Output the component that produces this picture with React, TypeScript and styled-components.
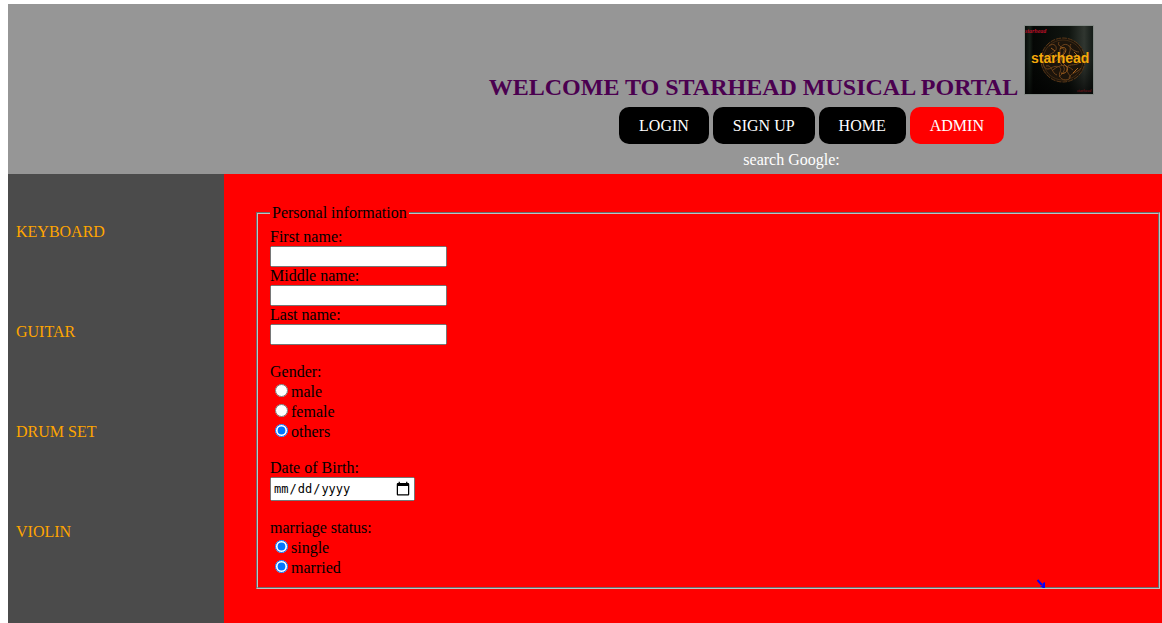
import React from "react";
import styled, { createGlobalStyle } from "styled-components";

const GlobalStyle = createGlobalStyle`
  body {
    margin: 4px 0 0 8px;
    background: #ffffff;
    color: #000000;
    font: 16px/18px "Liberation Serif", "Times New Roman", serif;
  }
`;

const Page = styled.div`
  display: flex;
  flex-direction: column;
  min-height: calc(100vh - 4px);
`;

const Header = styled.header`
  display: flex;
  flex-direction: column;
  align-items: center;
  padding: 21px 0 5px 413px;
  background: #969696;
`;

const Title = styled.h1`
  display: flex;
  align-items: baseline;
  gap: 6px;
  margin: 0 0 6px;
  color: #4b0050;
  font-size: 24px;
  line-height: 28px;
  white-space: nowrap;
`;

const Logo = styled.svg`
  width: 70px;
  height: 70px;
`;

const Nav = styled.nav`
  display: flex;
  gap: 4px;
  padding-left: 40px;
`;

const NavLink = styled.a<{ $accent?: boolean }>`
  padding: 10px 20px 9px;
  border-radius: 10px;
  background: ${(p) => (p.$accent ? "#ff0000" : "#000000")};
  color: #ffffff;
  text-decoration: none;
  white-space: nowrap;
`;

const SearchCaption = styled.p`
  margin: 7px 0 0;
  color: #ffffff;
`;

const Body = styled.div`
  display: flex;
  flex: 1;
`;

const Sidebar = styled.aside`
  display: flex;
  flex-direction: column;
  gap: 82px;
  box-sizing: border-box;
  width: 216px;
  flex-shrink: 0;
  padding: 49px 8px 0;
  background: #4b4b4b;
`;

const SideLink = styled.a`
  color: #ffa500;
  text-decoration: none;
`;

const Content = styled.main`
  flex: 1;
  padding: 30px 0 0 30px;
  background: #ff0000;
`;

const Fieldset = styled.fieldset`
  position: relative;
  margin: 0 2px;
  padding: 6px 12px 10px;
  border: 2px groove #c0c0c0;
`;

const Legend = styled.legend`
  padding: 0 2px;
`;

const Group = styled.div`
  display: flex;
  flex-direction: column;
  align-items: flex-start;

  & + & {
    margin-top: 18px;
  }
`;

const TextInput = styled.input`
  box-sizing: border-box;
  width: 177px;
  height: 21px;
  margin: 0;
`;

const DateInput = styled.input`
  box-sizing: border-box;
  width: 145px;
  height: 24px;
  margin: 0;
  font: 12px "DejaVu Sans Mono", monospace;

  &::-webkit-calendar-picker-indicator {
    width: 16px;
    height: 16px;
  }
`;

const Option = styled.label`
  display: flex;
  height: 20px;
  line-height: 22px;
`;

const Radio = styled.input`
  width: 13px;
  height: 13px;
  margin: 3px 3px 0 5px;
`;

const Arrow = styled.svg`
  position: absolute;
  right: 112px;
  bottom: -1px;
  width: 10px;
  height: 11px;
`;

const sections = ["KEYBOARD", "GUITAR", "DRUM SET", "VIOLIN"];

const nameFields = [
  { id: "first", label: "First name:" },
  { id: "middle", label: "Middle name:" },
  { id: "last", label: "Last name:" },
];

function StarheadLogo() {
  return (
    <Logo viewBox="0 0 70 70" role="img" aria-label="starhead">
      <defs>
        <linearGradient id="cover" x1="0" y1="0" x2="1" y2="0">
          <stop offset="0" stopColor="#080b09" />
          <stop offset="0.07" stopColor="#172019" />
          <stop offset="0.12" stopColor="#050705" />
          <stop offset="0.65" stopColor="#101510" />
          <stop offset="0.87" stopColor="#303630" />
          <stop offset="1" stopColor="#141b17" />
        </linearGradient>
        <linearGradient id="shade" x1="0" y1="0" x2="0" y2="1">
          <stop offset="0.5" stopColor="#000000" stopOpacity="0" />
          <stop offset="1" stopColor="#000000" stopOpacity="0.7" />
        </linearGradient>
      </defs>
      <rect width="70" height="70" fill="#858b87" />
      <rect x="1" y="1" width="68" height="68" fill="url(#cover)" />
      <rect x="1" y="1" width="68" height="68" fill="url(#shade)" />
      <g fill="none" stroke="#6b421b" strokeWidth="1">
        <circle cx="39" cy="35" r="22" fill="#1c140b" stroke="#5a3818" strokeDasharray="5 1" />
        <circle cx="39" cy="35" r="20" stroke="#3f2912" />
        <path d="M25 21c6-5 10 3 5 6s-10 5-5 9 12-3 11-9 5-10 9-6-3 8 2 10 10-4 9 4-12 2-13 8 6 8 2 11-12-1-9-7-4-7-9-4-8-1-8-6" />
        <path d="M35 17c-3 5 7 5 5 10s-7 9-2 13 1 8-3 12M47 19c-4 4 5 8 8 8M22 41c6-2 6 8 11 9M45 53c2-6 9-5 12-10M31 29c5 4 9 4 15 1M29 45c7-6 13-6 20 0" />
        <path stroke="#a3601d" d="M36 24c5-4 8 1 4 5s-2 9 2 12-1 9-5 7M26 30l5 3M49 48l5-5M27 23l4 3M50 27l4 4" />
      </g>
      <text x="1" y="8" fill="#bf1028" fontFamily="Liberation Serif, serif" fontSize="6" fontStyle="italic" fontWeight="700">starhead</text>
      <text x="7" y="38" fill="#f5a90a" fontFamily="Liberation Sans, sans-serif" fontSize="14" fontWeight="700">starhead</text>
      <text x="53" y="67" fill="#641319" fontFamily="Liberation Serif, serif" fontSize="4" fontStyle="italic">starhead</text>
    </Logo>
  );
}

function Choice({ name, label, checked }: { name: string; label: string; checked?: boolean }) {
  return (
    <Option>
      <Radio type="radio" name={name} defaultChecked={checked} />
      {label}
    </Option>
  );
}

export default function App() {
  return (
    <>
      <GlobalStyle />
      <Page>
        <Header>
          <Title>
            WELCOME TO STARHEAD MUSICAL PORTAL
            <StarheadLogo />
          </Title>
          <Nav>
            <NavLink href="#login">LOGIN</NavLink>
            <NavLink href="#signup">SIGN UP</NavLink>
            <NavLink href="#home">HOME</NavLink>
            <NavLink href="#admin" $accent>ADMIN</NavLink>
          </Nav>
          <SearchCaption>search Google:</SearchCaption>
        </Header>
        <Body>
          <Sidebar>
            {sections.map((section) => (
              <SideLink key={section} href="#instruments">{section}</SideLink>
            ))}
          </Sidebar>
          <Content>
            <form>
              <Fieldset>
                <Legend>Personal information</Legend>
                <Group>
                  {nameFields.map(({ id, label }) => (
                    <React.Fragment key={id}>
                      <label htmlFor={id}>{label}</label>
                      <TextInput id={id} type="text" />
                    </React.Fragment>
                  ))}
                </Group>
                <Group role="radiogroup" aria-labelledby="gender">
                  <span id="gender">Gender:</span>
                  <Choice name="gender" label="male" />
                  <Choice name="gender" label="female" />
                  <Choice name="gender" label="others" checked />
                </Group>
                <Group>
                  <label htmlFor="birth">Date of Birth:</label>
                  <DateInput id="birth" type="date" />
                </Group>
                <Group role="group" aria-labelledby="marriage">
                  <span id="marriage">marriage status:</span>
                  <Choice name="single" label="single" checked />
                  <Choice name="married" label="married" checked />
                </Group>
                <Arrow viewBox="0 0 10 11" aria-hidden="true">
                  <path d="M1.500 3l4.500 5" fill="none" stroke="#0000ff" strokeWidth="2" />
                  <path d="M9 5v6H7L4 9h2l1-3z" fill="#0000ff" />
                </Arrow>
              </Fieldset>
            </form>
          </Content>
        </Body>
      </Page>
    </>
  );
}
